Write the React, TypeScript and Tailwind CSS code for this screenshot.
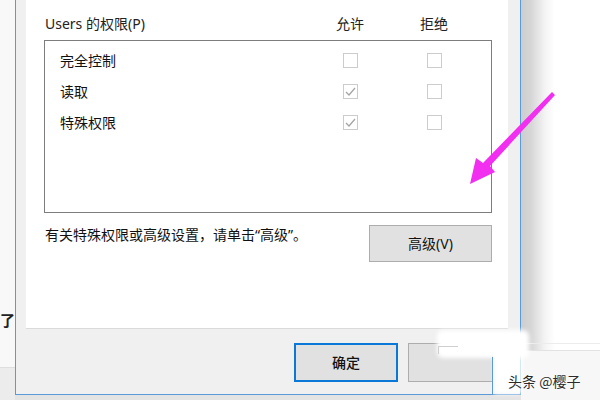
import React from "react";

const font = { fontFamily: '"Noto Sans", "Noto Sans CJK SC", sans-serif' };

function Box({ checked }: { checked?: boolean }) {
  return (
    <div className="w-[15px] h-[15px] border border-[#cccccc] bg-white flex items-center justify-center">
      {checked && (
        <svg width="13" height="13" viewBox="0 0 13 13">
          <polyline points="2,7 5,10 11,3" fill="none" stroke="#a3a3a3" strokeWidth="1.2" />
        </svg>
      )}
    </div>
  );
}

function Row({ label, allow }: { label: string; allow?: boolean }) {
  return (
    <div className="h-[31px] flex items-center pl-[15px]">
      <div className="w-[283px] text-[14px] text-[#111]">{label}</div>
      <Box checked={allow} />
      <div className="w-[69px]" />
      <Box />
    </div>
  );
}

export default function App() {
  return (
    <div className="relative w-[600px] h-[400px] overflow-hidden bg-white flex" style={font}>
      {/* left background strip */}
      <div className="w-[15px] h-full flex flex-col bg-[#f8f8f8]">
        <div className="h-[311px]" />
        <div className="h-[18px] text-[15px] leading-[18px] text-[#222] font-bold">了</div>
        <div className="h-[38px]" />
        <div className="flex-1 bg-[#ececec] border-t border-[#dedede]" />
      </div>

      {/* dialog */}
      <div className="w-[506px] h-full flex flex-col">
        <div className="h-[395px] flex flex-col bg-[#f0f0f0] border-l border-r border-b border-[#5a9ad8] pl-[10px] pr-[12px]">
          {/* white tab page */}
          <div className="h-[329px] bg-white border-b border-[#dadada] flex flex-col pl-[18px] pr-[16px]">
            <div className="h-[20px] mt-[14px] flex items-center pl-[1px] text-[14px] leading-[20px] text-[#222]">
              <div className="w-[285px]">Users 的权限(P)</div>
              <div className="w-[40px] text-center">允许</div>
              <div className="w-[44px]" />
              <div className="w-[40px] text-center">拒绝</div>
            </div>
            <div className="mt-[6px] h-[173px] border border-[#7d7d7d] pt-[4px] flex flex-col">
              <Row label="完全控制" />
              <Row label="读取" allow />
              <Row label="特殊权限" allow />
            </div>
            <div className="mt-[12px] flex justify-between items-start">
              <div className="pl-[1px] text-[14px] leading-[20px] text-[#111]">
                有关特殊权限或高级设置，请单击“高级”。
              </div>
              <div className="w-[123px] h-[37px] bg-[#e1e1e1] border border-[#adadad] flex items-center justify-center text-[14px] text-[#111]">
                高级(V)
              </div>
            </div>
          </div>
          {/* footer buttons */}
          <div className="mt-[14px] flex pl-[268px] gap-[10px]">
            <div className="w-[104px] h-[39px] bg-[#e1e1e1] border-2 border-[#0a78d6] flex items-center justify-center text-[14px] font-medium text-[#111]">
              确定
            </div>
            <div className="w-[85px] h-[39px] bg-[#e1e1e1] border border-[#adadad]" />
          </div>
        </div>
        <div className="flex-1 bg-[#e4e4e4]" />
      </div>

      {/* right background with window shadow */}
      <div className="flex-1 h-full bg-[linear-gradient(to_right,#cdcdcd_0px,#d6d6d6_10px,#f4f4f4_24px,#ffffff_34px)] flex flex-col">
        <div className="h-[343px]" />
        <div className="h-[7px] border-t border-[#ececec]" />
        <div className="flex-1 border-t border-[#e2e2e2] bg-[#f7f7f7]" />
      </div>

      {/* watermark smudges */}
      <div className="absolute left-[437px] top-[330px] w-[92px] h-[28px] bg-white rounded-[6px] blur-[2px]" />
      <div className="absolute left-[494px] top-[350px] w-[28px] h-[44px] bg-white blur-[2px]" />
      <div className="absolute left-[492px] top-[357px] w-[1px] h-[38px] bg-[#5a9ad8]" />
      <div className="absolute left-[438px] top-[346px] w-[20px] h-[1px] bg-[#cfcfcf]" />
      <div className="absolute left-[438px] top-[346px] w-[1px] h-[8px] bg-[#cfcfcf]" />

      <div
        className="absolute left-[508px] top-[372px] text-[14px] leading-[18px] text-[#2a2a2a] whitespace-nowrap"
        style={{ fontFamily: '"Noto Sans CJK SC", sans-serif', textShadow: "0 0 2px #fff, 0 0 2px #fff" }}
      >
        头条 @樱子
      </div>

      {/* magenta arrow annotation */}
      <svg className="absolute left-0 top-0 pointer-events-none" width="600" height="400" viewBox="0 0 600 400">
        <polygon
          points="552,92 555,95 490,166 495,172 470,184 476,158 483,163"
          fill="#f22ef0"
        />
      </svg>
    </div>
  );
}
